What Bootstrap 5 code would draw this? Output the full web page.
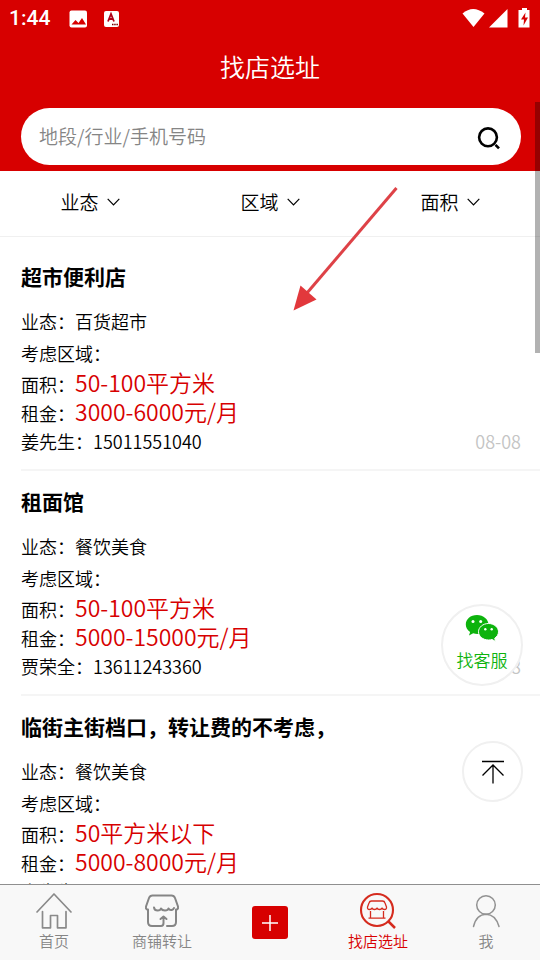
<!DOCTYPE html>
<html lang="zh-CN">
<head>
<meta charset="utf-8">
<meta name="viewport" content="width=device-width, initial-scale=1">
<title>找店选址</title>
<link href="https://cdn.jsdelivr.net/npm/bootstrap@5.3.0/dist/css/bootstrap.min.css" rel="stylesheet">
<style>
  :root { --brand: #d70000; }
  body { font-family: "Noto Sans CJK SC", sans-serif; font-size: 18px; font-weight: 350; color: #000; }
  button, input { font-family: inherit; }
  .app-head { background: var(--brand); padding-bottom: 6px; }
  .status-bar { height: 37px; padding: 0 9px; font: 500 21px/37px Roboto, sans-serif; }
  .page-title { font-size: 25px; line-height: 37px; padding: 11px 0 23px; font-weight: 350; }
  .search-box { height: 57px; margin: 0 19px 0 21px; padding: 0 18px; }
  .search-box input { font-size: 19px; font-weight: 350; outline: 0; color: #333; }
  .search-box input::placeholder { color: #858585; opacity: 1; }
  .filter-bar { border-bottom: 1px solid #f0f0f0; }
  .filter-bar button { font-size: 19px; font-weight: 350; line-height: 28px; padding: 17px 0 20px; gap: 8px; }
  .shop-list { padding: 9px 0 0 21px; }
  .shop-item { border-bottom: 2px solid #f5f5f5; padding: 16px 19px 13px 0; }
  .shop-item h2 { font-size: 21px; line-height: 28px; font-weight: 700; margin: 0 0 15px; }
  .line-tall { line-height: 32px; }
  .line-short { line-height: 29px; height: 29px; }
  .line-red { line-height: 27px; height: 29px; }
  .figure-red { font-size: 23px; color: var(--brand); }
  .post-date { color: #c4c4c4; }
  .scroll-thumb { top: 102px; right: 0; width: 5px; height: 251px; background: rgba(0,0,0,.3); }
  .note-arrow { top: 186px; left: 292px; pointer-events: none; }
  .round-btn { background: #fff; border: 2px solid #f0f0f0; border-radius: 50%; }
  .wechat-btn { width: 82px; height: 82px; right: 17px; bottom: 274px; color: #0db30d; font-size: 17px; font-weight: 350; line-height: 24px; padding-bottom: 4px; gap: 6px; }
  .top-btn { width: 61px; height: 61px; right: 17px; bottom: 158px; }
  .tab-bar { height: 76px; background: #f8f8f8; border-top: 1px solid #8f8f8f; }
  .tab-bar a { color: #858585; font-size: 15px; line-height: 22px; padding-top: 7px; }
  .tab-bar a.on { color: var(--brand); }
  .tab-bar .add-link { padding: 0; }
  .add-tile { width: 36px; height: 33px; background: var(--brand); border-radius: 3px; }
</style>
<script src="https://cdn.jsdelivr.net/npm/bootstrap@5.3.0/dist/js/bootstrap.bundle.min.js"></script>
</head>
<body>
<div class="vh-100 d-flex flex-column overflow-hidden position-relative bg-white">
  <header class="app-head text-white flex-shrink-0">
    <div class="status-bar d-flex align-items-center justify-content-between">
      <div class="d-flex align-items-center">
        <span>1:44</span>
        <svg class="ms-3" width="60" height="20" viewBox="0 0 60 20" aria-hidden="true">
          <rect x="3.500" y="1.500" width="17.500" height="17" rx="2" fill="#fff"/>
          <path d="M5.500 15.500l4-4.500 3 3 3.500-5 4 6.500z" fill="#d70000"/>
          <rect x="38" y="2" width="15" height="16" rx="2" fill="#fff"/>
          <path d="M42 12.500l3-7.500 3 7.500M43 10h4" fill="none" stroke="#b00018" stroke-width="1.800"/>
          <path d="M46 15.500h6" stroke="#700" stroke-width="1.500" stroke-dasharray="1.500 .7"/>
        </svg>
      </div>
      <svg width="70" height="22" viewBox="0 0 70 22" aria-hidden="true">
        <path d="M1.500 5.500Q12 -3.500 23.500 5.500L12.500 19z" fill="#fff"/>
        <path d="M28 19.500L46.500 1v18.500z" fill="#fff"/>
        <path d="M61 0h5v2h2.500v17.500h-11V2H61z" fill="#fff"/>
        <path d="M64.500 4.500l-4.500 7h3l-.5 6 4.500-8h-3z" fill="#d70000"/>
      </svg>
    </div>
    <h1 class="page-title text-center m-0">找店选址</h1>
    <form class="search-box bg-white rounded-pill d-flex align-items-center" role="search">
      <input type="text" class="border-0 bg-transparent flex-grow-1 p-0" placeholder="地段/行业/手机号码" aria-label="地段/行业/手机号码">
      <button type="button" class="btn border-0 p-0 d-flex" aria-label="搜索">
        <svg width="28" height="28" viewBox="0 0 28 28" fill="none" stroke="#000" stroke-width="2.600">
          <circle cx="13" cy="14.300" r="8.900"/><path d="M20.500 21.800l3.500 3.500"/>
        </svg>
      </button>
    </form>
  </header>

  <div class="filter-bar row g-0 flex-shrink-0">
    <div class="col"><button type="button" class="btn border-0 rounded-0 text-black w-100 d-flex justify-content-center align-items-center">业态<svg width="13" height="8" viewBox="0 0 13 8" fill="none" stroke="#000" stroke-width="1.200"><path d="M.7 .8l5.800 6 5.800-6"/></svg></button></div>
    <div class="col"><button type="button" class="btn border-0 rounded-0 text-black w-100 d-flex justify-content-center align-items-center">区域<svg width="13" height="8" viewBox="0 0 13 8" fill="none" stroke="#000" stroke-width="1.200"><path d="M.7 .8l5.800 6 5.800-6"/></svg></button></div>
    <div class="col"><button type="button" class="btn border-0 rounded-0 text-black w-100 d-flex justify-content-center align-items-center">面积<svg width="13" height="8" viewBox="0 0 13 8" fill="none" stroke="#000" stroke-width="1.200"><path d="M.7 .8l5.800 6 5.800-6"/></svg></button></div>
  </div>

  <main class="shop-list flex-grow-1 overflow-hidden">
    <article class="shop-item">
      <h2>超市便利店</h2>
      <div class="line-tall">业态：百货超市</div>
      <div class="line-tall">考虑区域：</div>
      <div class="line-red">面积：<span class="figure-red">50-100平方米</span></div>
      <div class="line-red">租金：<span class="figure-red">3000-6000元/月</span></div>
      <div class="line-short d-flex justify-content-between"><span>姜先生：15011551040</span><span class="post-date">08-08</span></div>
    </article>
    <article class="shop-item">
      <h2>租面馆</h2>
      <div class="line-tall">业态：餐饮美食</div>
      <div class="line-tall">考虑区域：</div>
      <div class="line-red">面积：<span class="figure-red">50-100平方米</span></div>
      <div class="line-red">租金：<span class="figure-red">5000-15000元/月</span></div>
      <div class="line-short d-flex justify-content-between"><span>贾荣全：13611243360</span><span class="post-date">08-08</span></div>
    </article>
    <article class="shop-item">
      <h2>临街主街档口，转让费的不考虑，</h2>
      <div class="line-tall">业态：餐饮美食</div>
      <div class="line-tall">考虑区域：</div>
      <div class="line-red">面积：<span class="figure-red">50平方米以下</span></div>
      <div class="line-red">租金：<span class="figure-red">5000-8000元/月</span></div>
      <div class="line-short">方先生：</div>
    </article>
  </main>

  <nav class="tab-bar row row-cols-5 g-0 flex-shrink-0 position-relative">
    <a href="#" class="col d-flex flex-column align-items-center text-decoration-none">
      <svg width="38" height="38" viewBox="0 0 38 38" fill="none" stroke="#8a8a8a" stroke-width="1.700" stroke-linejoin="round" stroke-linecap="round">
        <path d="M2 20L19 2l17 18M7.500 19.500v16.300h8V23.500h7v12.300h8.500V19.500"/>
      </svg>首页</a>
    <a href="#" class="col d-flex flex-column align-items-center text-decoration-none">
      <svg width="38" height="38" viewBox="0 0 38 38" fill="none" stroke="#858585" stroke-width="2" stroke-linejoin="round" stroke-linecap="round">
        <path d="M5 17.500h-1q-1.500-1-1-3L6 6Q7 3.500 9.500 3.500h19Q31 3.500 32 6l3 8.500q.5 2-1 3h-1M5 17.500V30q0 4 4 4h9q2.500 0 2.500-3v-6M17.500 27l3-2.500 3 2.500M24 34h5q4 0 4-4V17.500M11 15.500q.5 3 3.700 3 2.800 0 3.300-2 1 2 4 2t3.500-2q1 2 3.300 1.500 1.700-.5 2.200-2"/>
      </svg>商铺转让</a>
    <a href="#" class="add-link col d-flex flex-column align-items-center justify-content-center" aria-label="发布">
      <span class="add-tile d-flex align-items-center justify-content-center">
        <svg width="16" height="16" viewBox="0 0 16 16" stroke="#fff" stroke-width="1.500"><path d="M0 8h16M8 0v16"/></svg>
      </span></a>
    <a href="#" class="on col d-flex flex-column align-items-center text-decoration-none" aria-current="page">
      <svg width="38" height="38" viewBox="0 0 38 38" fill="none" stroke="#d52b1e" stroke-width="2.100" stroke-linejoin="round">
        <circle cx="18" cy="18" r="16"/><path d="M29.500 29.500l6.500 6.500" stroke-width="2.500"/>
        <path stroke-width="1.300" d="M12.500 9h11q2 0 2.500 2l1.500 4q.3 2.500-2 2.500-2 0-2.500-1.500Q22.500 17.500 20.500 17.500t-2.500-1.500Q17.500 17.500 15.500 17.500t-2.500-1.500Q12.500 17.500 10.500 17.500q-2.300 0-2-2.500l1.500-4q.5-2 2.500-2zM11.500 19v7M24.500 19v7M9.500 26.200h17"/>
      </svg>找店选址</a>
    <a href="#" class="col d-flex flex-column align-items-center text-decoration-none">
      <svg width="38" height="38" viewBox="0 0 38 38" fill="none" stroke="#929292" stroke-width="1.500" stroke-linecap="round">
        <circle cx="19" cy="13" r="9.300"/><path d="M6.500 34.500Q9.500 22.500 19 22.300 28.500 22.500 32 34.500"/>
      </svg>我</a>
  </nav>

  <button type="button" class="round-btn wechat-btn position-absolute d-flex flex-column align-items-center justify-content-center px-0 pt-0">
    <svg width="34" height="28" viewBox="0 0 34 28" aria-hidden="true">
      <path fill="#0db30d" d="M12 1C5.500 1 .8 5.200 .8 10.500c0 3.200 1.700 5.800 4.300 7.500L4 21.500l4.200-2.200q2 .6 4.300 .6C18.500 19.500 23.500 15.500 23.500 10.500S18.500 1 12 1z"/>
      <circle cx="8" cy="7.500" r="1.500" fill="#fff"/><circle cx="15.700" cy="7.500" r="1.500" fill="#fff"/>
      <path fill="#0db30d" stroke="#fff" stroke-width="1" d="M23.500 9.500c-5.600 0-10 3.800-10 8.300s4.400 8.200 10 8.200q1.800 0 3.500-.5l3.700 2-1-3.200c2.300-1.600 3.800-3.800 3.800-6.500 0-4.500-4.400-8.300-10-8.300z"/>
      <circle cx="20.300" cy="15.200" r="1.200" fill="#fff"/><circle cx="26.700" cy="15.200" r="1.200" fill="#fff"/>
    </svg>找客服</button>

  <button type="button" class="round-btn top-btn position-absolute d-flex align-items-center justify-content-center p-0" aria-label="回到顶部">
    <svg width="24" height="24" viewBox="0 0 24 24" fill="none" stroke="#000" stroke-width="1.300"><path d="M1 1.500h22M12 23.500V5M1.500 15.500L12 5l10.500 10.500"/></svg>
  </button>

  <svg class="note-arrow position-absolute" width="106" height="126" viewBox="0 0 106 126" aria-hidden="true">
    <path d="M104.500 2L15 107" stroke="#de4247" stroke-width="3"/>
    <path d="M1.500 124.500L8.500 99.500 24.500 113.500z" fill="#e2383c"/>
  </svg>
  <div class="scroll-thumb position-absolute"></div>
</div>
</body>
</html>
